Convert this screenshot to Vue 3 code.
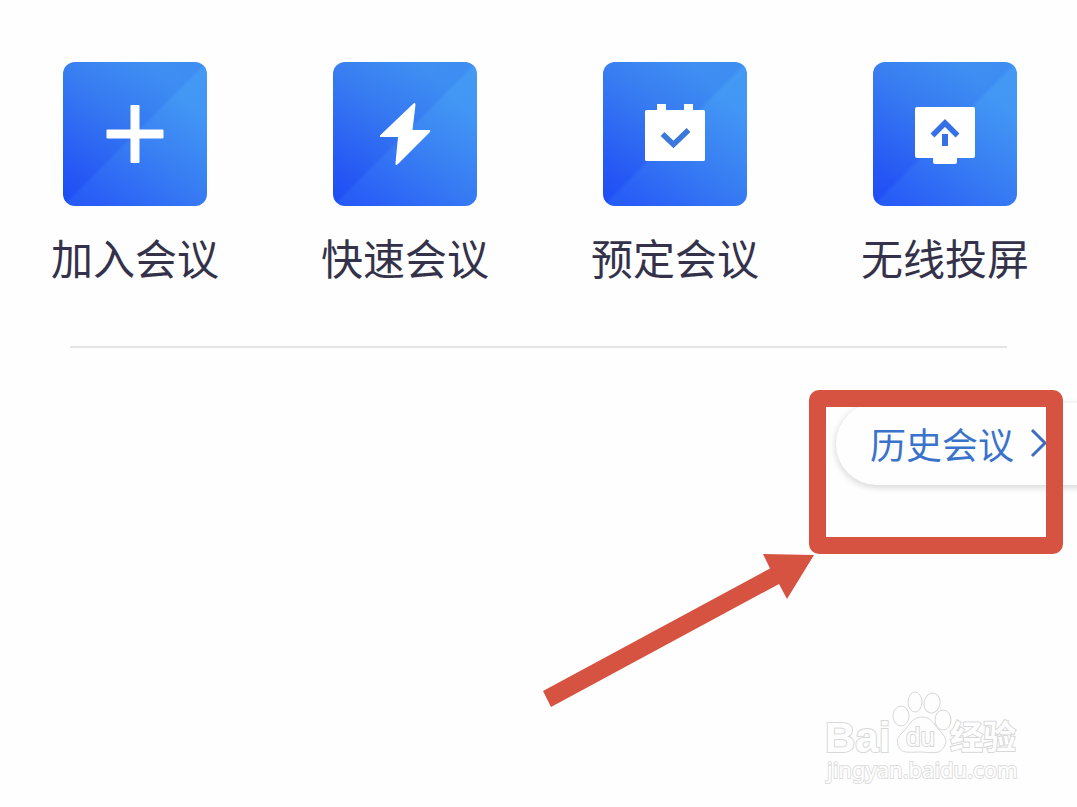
<script setup>
const actions = [
  { id: 'join', label: '加入会议' },
  { id: 'quick', label: '快速会议' },
  { id: 'book', label: '预定会议' },
  { id: 'cast', label: '无线投屏' },
]
</script>

<template>
  <main class="page">
    <nav class="actions">
      <button v-for="a in actions" :key="a.id" type="button" class="action">
        <span class="tile">
          <svg viewBox="0 0 144 144" aria-hidden="true">
            <path v-if="a.id === 'join'" d="M68.500 43h7q1 0 1 1v23.500h23q1 0 1 1v7q0 1-1 1h-23v23.500q0 1-1 1h-7q-1 0-1-1v-23.500h-23q-1 0-1-1v-7q0-1 1-1h23v-23.500q0-1 1-1z" fill="#fff" />
            <path v-else-if="a.id === 'quick'" d="M80.500 41.500Q82.500 40 82.500 43L79.500 68H96Q98.500 68.500 96.500 70.500L65 102Q62 104.500 62.500 101L65 75H48Q45.500 74.500 48 72.500Z" fill="#fff" />
            <g v-else-if="a.id === 'book'">
              <path d="M54 42h9v6h18v-6h9v6h10.500q1.500 0 1.500 1.500v48q0 1.500-1.500 1.500h-57q-1.500 0-1.500-1.500v-48q0-1.500 1.500-1.500h10.500z" fill="#fff" />
              <path d="M59.500 72 70.500 82.500 85.500 68" fill="none" stroke="#3c78dc" stroke-width="5.500" />
            </g>
            <g v-else>
              <path d="M44 45h56q2 0 2 2v47q0 2-2 2H84v4q0 2-2 2H62q-2 0-2-2v-4H44q-2 0-2-2V47q0-2 2-2z" fill="#fff" />
              <path d="M59.500 73.500 72 61 84.500 73.500" fill="none" stroke="#3670e6" stroke-width="5.500" />
              <path d="M69 72h6v12h-6z" fill="#3670e6" />
            </g>
          </svg>
        </span>
        <span class="label">{{ a.label }}</span>
      </button>
    </nav>

    <hr class="divider" />

    <section class="history">
      <button type="button" class="pill">
        历史会议
        <svg class="chevron" viewBox="0 0 18 30" aria-hidden="true">
          <path d="M2 2 15 15 2 28" fill="none" stroke="#3f6cc0" stroke-width="3" />
        </svg>
      </button>
      <div class="frame"></div>
      <svg class="arrow" viewBox="0 0 274 156" aria-hidden="true">
        <path d="M0 138 227 15.500 220 1 271 2 244 46 236 31 8 154z" fill="#d65241" />
      </svg>
    </section>

    <footer class="footer">
      <svg class="watermark" viewBox="0 0 200 100" role="img" aria-label="Baidu 经验">
        <text class="brand" x="3" y="66">Bai</text>
        <ellipse cx="79" cy="30" rx="8" ry="10" />
        <ellipse cx="93" cy="16" rx="7" ry="10" />
        <ellipse cx="110" cy="17" rx="8" ry="10" transform="rotate(12 110 17)" />
        <ellipse cx="121" cy="34" rx="8" ry="10" />
        <path d="M100 31C90 31 87 40 81 46C75 51 74 56 77 61C80 68 88 66 100 66C112 67 118 68 122 61C126 55 123 50 118 45C112 39 110 31 100 31Z" />
        <text class="du" x="84" y="60">du</text>
        <text class="exp" x="128" y="63">经验</text>
        <text class="site" x="5" y="92">jingyan.baidu.com</text>
      </svg>
    </footer>
  </main>
</template>

<style>
body {
  margin: 0;
  background: #fefefe;
}
</style>

<style scoped>
.page {
  min-height: 100vh;
  box-sizing: border-box;
  display: flex;
  flex-direction: column;
  overflow: hidden;
  background: #fefefe;
  font-family: "Liberation Sans", "Noto Sans CJK SC", sans-serif;
}
button {
  border: 0;
  margin: 0;
  font-family: "Noto Sans CJK SC", sans-serif;
  cursor: pointer;
}
.actions {
  display: grid;
  grid-template-columns: repeat(4, 1fr);
  margin-right: -3px;
  padding-top: 62px;
}
.action {
  display: flex;
  flex-direction: column;
  align-items: center;
  gap: 21px;
  padding: 0;
  background: none;
}
.tile {
  width: 144px;
  height: 144px;
  border-radius: 12px;
  overflow: hidden;
  background:
    linear-gradient(135deg, rgba(70, 150, 240, 0.2) 0%, rgba(40, 100, 236, 0.2) 49%, rgba(70, 160, 246, 0.2) 51%, rgba(50, 120, 246, 0.2) 100%),
    linear-gradient(to top right, #1b46f6 0%, #2452f6 15%, #377af2 50%, #4296f4 80%, #4498f4 100%);
}
.tile svg {
  display: block;
  width: 100%;
  height: 100%;
}
.label {
  color: #34324a;
  font-size: 42px;
  line-height: 60px;
  white-space: nowrap;
}
.divider {
  width: 87%;
  height: 2px;
  margin: 59px auto 0;
  border: 0;
  background: #e4e4e4;
}
.history {
  position: relative;
  display: flex;
  justify-content: flex-end;
  padding-top: 55px;
}
.pill {
  display: flex;
  align-items: center;
  gap: 16px;
  height: 82px;
  margin-right: -40px;
  padding: 0 69px 2px 34px;
  border-radius: 41px 0 0 41px;
  background: #fefefe;
  box-shadow: 0 2px 6px 1px rgba(0, 0, 0, 0.14);
  color: #3a73cc;
  font-size: 36px;
  line-height: 52px;
  white-space: nowrap;
}
.chevron {
  width: 18px;
  height: 30px;
}
.frame {
  position: absolute;
  top: 42px;
  right: 14px;
  box-sizing: border-box;
  width: 254px;
  height: 164px;
  border: 17px solid #d65241;
  border-radius: 10px;
}
.arrow {
  position: absolute;
  top: 205px;
  right: 260px;
  width: 274px;
  height: 156px;
}
.footer {
  display: flex;
  justify-content: flex-end;
  margin-top: auto;
  padding: 0 55px 21px 0;
}
.watermark {
  width: 200px;
  height: 100px;
  overflow: visible;
  fill: #fefefe;
  stroke: #d8d8d8;
  stroke-width: 1px;
}
.watermark text {
  paint-order: stroke;
  stroke-width: 2px;
}
.brand {
  font-size: 42px;
  font-weight: 700;
}
.du {
  font-size: 26px;
}
.exp {
  font-family: "Noto Sans CJK SC", sans-serif;
  font-size: 33px;
  font-weight: 700;
}
.watermark .site {
  font-family: "Noto Sans", sans-serif;
  font-size: 22px;
  stroke: #dedede;
}
</style>
